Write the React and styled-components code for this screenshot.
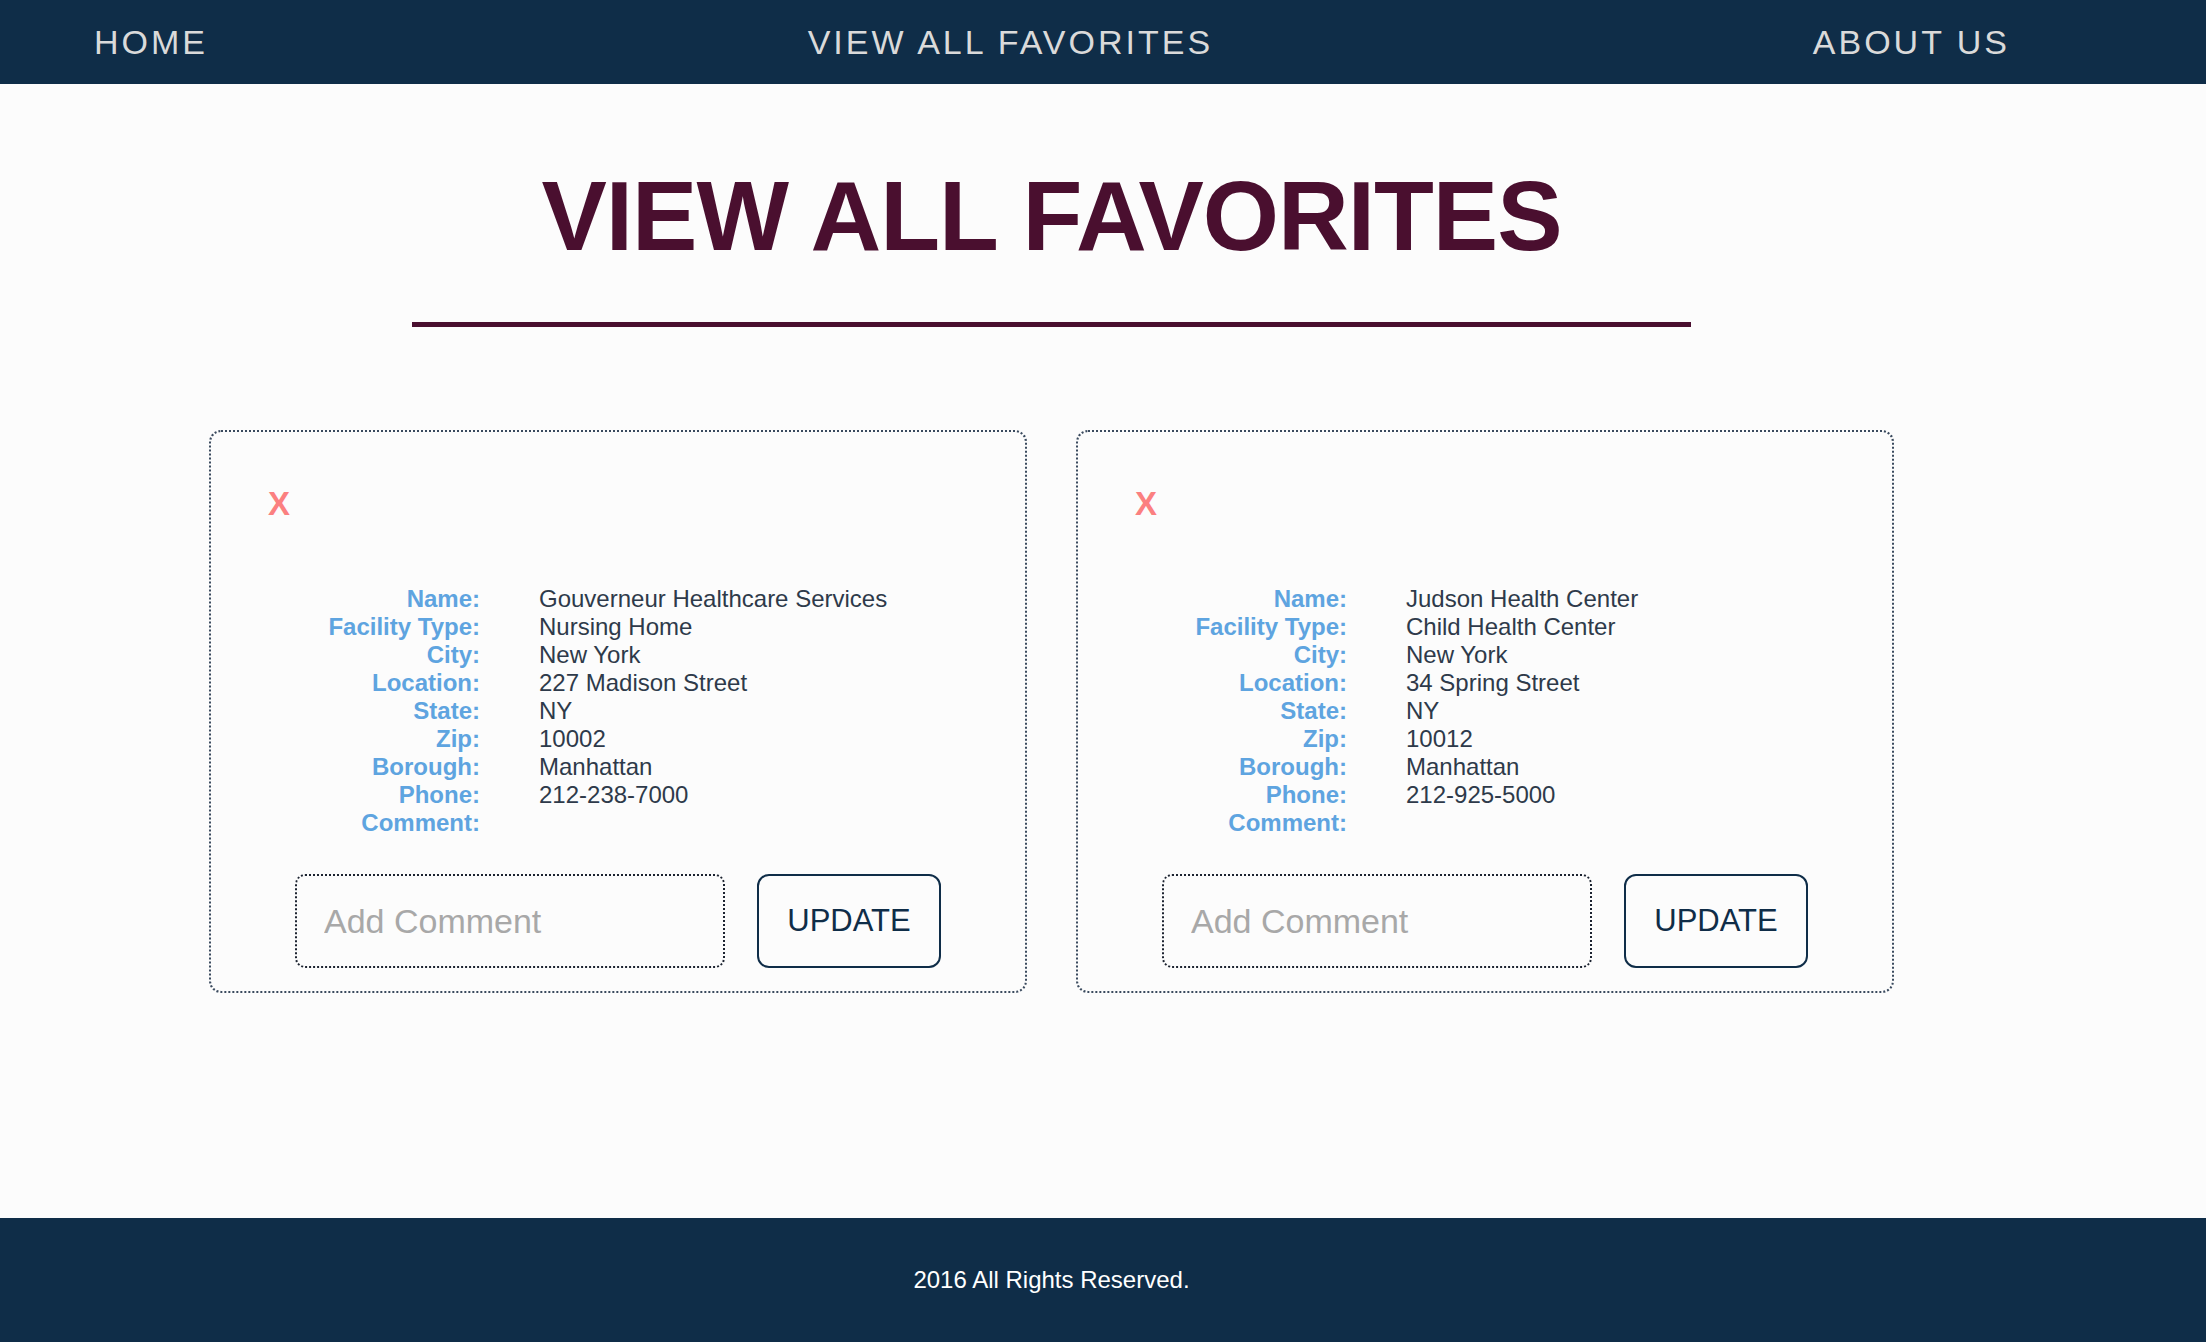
import React from "react";
import styled, { createGlobalStyle } from "styled-components";

const GlobalStyle = createGlobalStyle`
  * { box-sizing: border-box; }
  html, body {
    margin: 0;
    padding: 0;
    background: #fcfcfc;
    font-family: "Liberation Sans", Arial, Helvetica, sans-serif;
  }
`;

const Page = styled.div`
  min-height: 100vh;
  display: flex;
  flex-direction: column;
  background: #fcfcfc;
`;

const Nav = styled.nav`
  height: 84px;
  background: #0f2d48;
  display: flex;
  align-items: center;
  justify-content: space-between;
  padding: 0 196px 0 94px;
`;

const NavLink = styled.a`
  color: #dadada;
  font-size: 34px;
  letter-spacing: 3px;
  text-decoration: none;
  cursor: pointer;
  line-height: 1;
`;

const Main = styled.main`
  flex: 1;
  display: flex;
  flex-direction: column;
  align-items: center;
  padding: 83px 103px 225px 0;
`;

const Title = styled.h1`
  margin: 0;
  font-size: 98px;
  line-height: 98px;
  font-weight: 700;
  letter-spacing: -1px;
  color: #4a0f2f;
`;

const Rule = styled.hr`
  width: 1279px;
  height: 5px;
  margin: 57px 0 103px;
  border: none;
  background: #4a0f2f;
`;

const CardRow = styled.div`
  display: flex;
  gap: 49px;
`;

const Card = styled.div`
  width: 818px;
  border: 2px dotted #3a4a5e;
  border-radius: 12px;
  padding: 52px 0 23px;
  display: flex;
  flex-direction: column;
`;

const RemoveButton = styled.span`
  margin-left: 57px;
  font-size: 33px;
  line-height: 40px;
  font-weight: 700;
  color: #fb8080;
  cursor: pointer;
`;

const Info = styled.dl`
  margin: 61px 0 0;
  padding-left: 57px;
  display: grid;
  grid-template-columns: 212px auto;
  column-gap: 59px;
  font-size: 24px;
  line-height: 28px;
`;

const Label = styled.dt`
  text-align: right;
  font-weight: 700;
  color: #5ea4e0;
`;

const Value = styled.dd`
  margin: 0;
  color: #2e3a4a;
`;

const CommentRow = styled.form`
  margin-top: 37px;
  display: flex;
  justify-content: center;
  gap: 32px;
`;

const CommentInput = styled.input`
  width: 430px;
  height: 94px;
  border: 2px dotted #1c2330;
  border-radius: 10px;
  padding: 0 0 0 27px;
  background: transparent;
  font-family: "Liberation Sans", Arial, sans-serif;
  font-size: 34px;
  color: #333;
  outline: none;
  &::placeholder { color: #a8a8a8; }
`;

const UpdateButton = styled.button`
  width: 184px;
  height: 94px;
  border: 2px solid #0f2d48;
  border-radius: 12px;
  background: transparent;
  color: #0f2d48;
  font-family: "Liberation Sans", Arial, sans-serif;
  font-size: 31px;
  cursor: pointer;
`;

const Footer = styled.footer`
  height: 124px;
  background: #0f2d48;
  display: flex;
  align-items: center;
  justify-content: center;
  padding-right: 103px;
  color: #fff;
  font-size: 24px;
`;

const favorites = [
  {
    name: "Gouverneur Healthcare Services",
    type: "Nursing Home",
    city: "New York",
    location: "227 Madison Street",
    state: "NY",
    zip: "10002",
    borough: "Manhattan",
    phone: "212-238-7000",
    comment: "",
  },
  {
    name: "Judson Health Center",
    type: "Child Health Center",
    city: "New York",
    location: "34 Spring Street",
    state: "NY",
    zip: "10012",
    borough: "Manhattan",
    phone: "212-925-5000",
    comment: "",
  },
];

const fields = [
  ["Name", "name"],
  ["Facility Type", "type"],
  ["City", "city"],
  ["Location", "location"],
  ["State", "state"],
  ["Zip", "zip"],
  ["Borough", "borough"],
  ["Phone", "phone"],
  ["Comment", "comment"],
];

function FavoriteCard({ fav }) {
  return (
    <Card>
      <RemoveButton>X</RemoveButton>
      <Info>
        {fields.map(([label, key]) => (
          <React.Fragment key={key}>
            <Label>{label}:</Label>
            <Value>{fav[key]}</Value>
          </React.Fragment>
        ))}
      </Info>
      <CommentRow onSubmit={(e) => e.preventDefault()}>
        <CommentInput type="text" placeholder="Add Comment" />
        <UpdateButton type="submit">UPDATE</UpdateButton>
      </CommentRow>
    </Card>
  );
}

export default function App() {
  return (
    <>
      <GlobalStyle />
      <Page>
        <Nav>
          <NavLink>HOME</NavLink>
          <NavLink>VIEW ALL FAVORITES</NavLink>
          <NavLink>ABOUT US</NavLink>
        </Nav>
        <Main>
          <Title>VIEW ALL FAVORITES</Title>
          <Rule />
          <CardRow>
            {favorites.map((fav) => (
              <FavoriteCard key={fav.name} fav={fav} />
            ))}
          </CardRow>
        </Main>
        <Footer>2016 All Rights Reserved.</Footer>
      </Page>
    </>
  );
}
